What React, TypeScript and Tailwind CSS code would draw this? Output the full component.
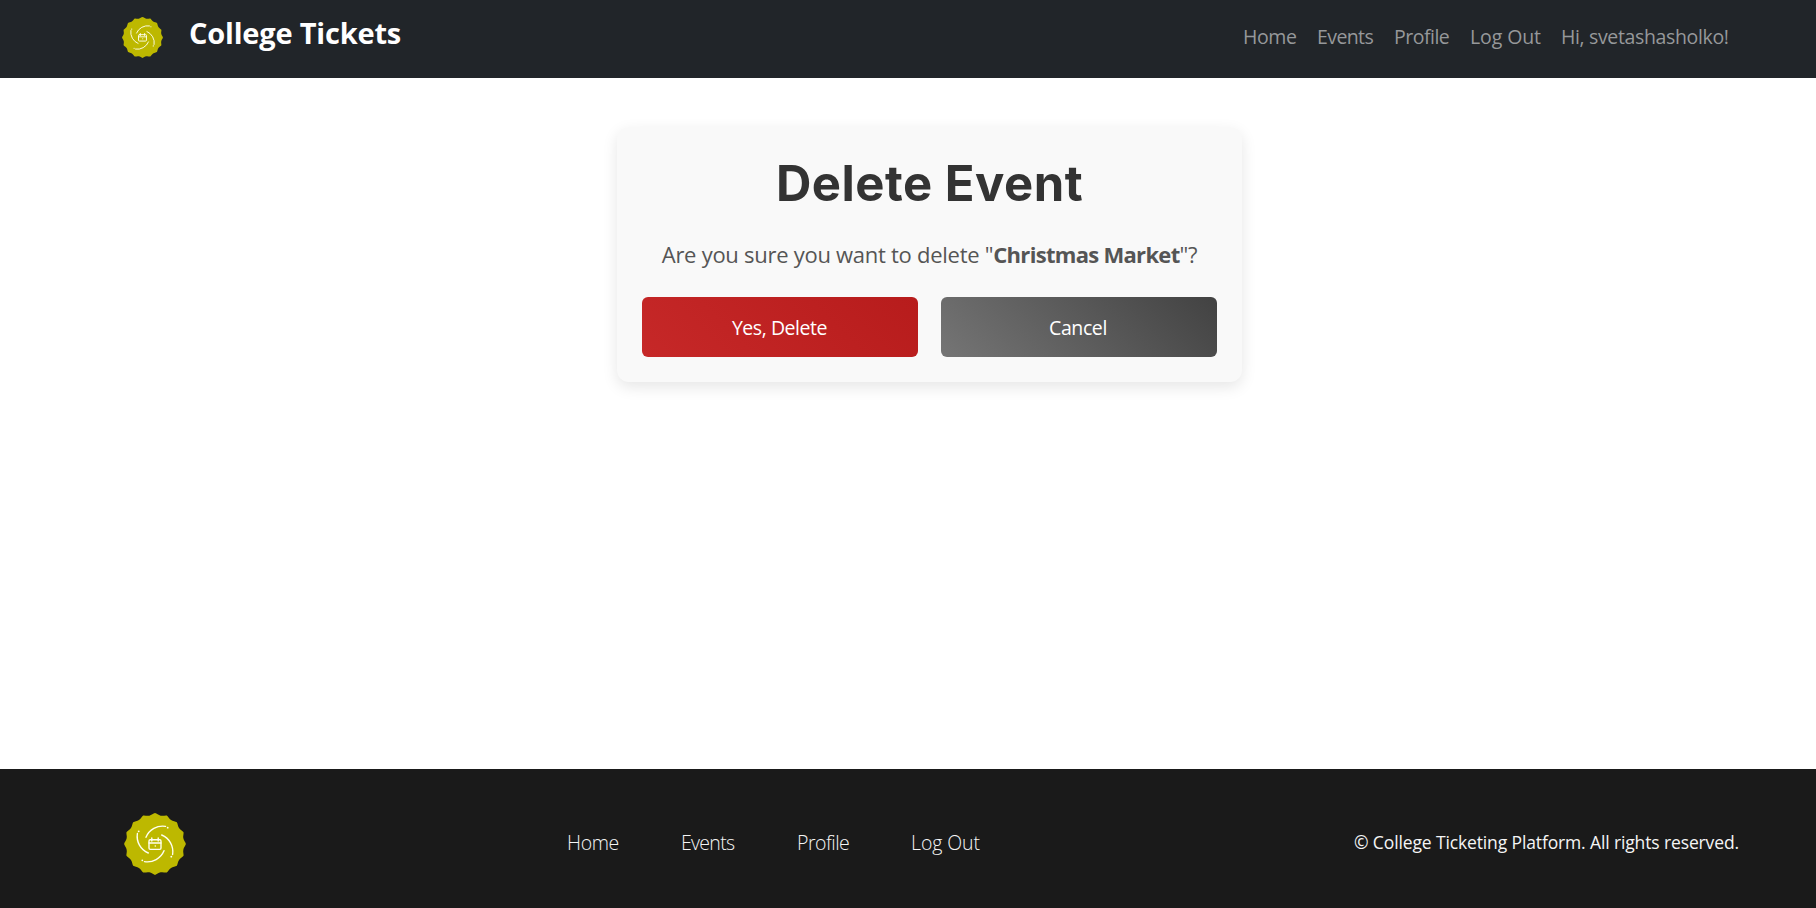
import React from 'react';

const ARC_ANGLES = [0, 90, 180, 270];

function badgeOutline(): string {
  const lobes = 16;
  const point = (radius: number, angle: number) =>
    `${(radius * Math.sin(angle)).toFixed(2)} ${(-radius * Math.cos(angle)).toFixed(2)}`;
  const step = (2 * Math.PI) / lobes;
  let d = `M${point(28.9, -step / 2)}`;
  for (let i = 0; i < lobes; i += 1) {
    const a = i * step;
    d += `C${point(28.9, a - step * 0.3)} ${point(30.5, a - step * 0.15)} ${point(30.9, a)}`;
    d += `C${point(30.5, a + step * 0.15)} ${point(28.9, a + step * 0.3)} ${point(28.9, a + step / 2)}`;
  }
  return `${d}Z`;
}

function Logo({ className }: { className: string }) {
  return (
    <svg viewBox="-31 -31 62 62" className={className} fill="none" aria-hidden="true">
      <path d={badgeOutline()} fill="#bdb800" />
      {ARC_ANGLES.map((angle) => (
        <g key={angle} transform={`rotate(${angle})`}>
          <path d="M-9 -6.7A18 18 0 0 1 10.5 -17.6" stroke="#fffff0" strokeWidth="1.4" strokeLinecap="round" />
          <circle cx="12.7" cy="-16.3" r="0.9" fill="#fffff0" />
        </g>
      ))}
      <g stroke="#fffff0" strokeWidth="1.4" strokeLinecap="round">
        <rect x="-6" y="-4.3" width="12" height="9.7" rx="1.3" />
        <path d="M-6 -1H6M-3.2 -6V-3M3.2 -6V-3" />
      </g>
      <circle cx="0.3" cy="2" r="0.8" fill="#fffff0" />
    </svg>
  );
}

export default function App() {
  return (
    <div className="flex h-[908px] w-full flex-col bg-white font-['Open_Sans',sans-serif]">
      <header className="flex h-[78px] shrink-0 items-start bg-[#212529] pl-[122px]">
        <Logo className="mt-[17px] h-[41px] w-[41px]" />
        <span className="ml-[26px] mt-[11px] whitespace-nowrap text-[29px] font-bold leading-[44px] tracking-[-0.2px] text-white">
          College Tickets
        </span>
        <nav className="ml-auto mt-[22px] flex whitespace-nowrap text-[19.5px] leading-[30px] text-[#96989a]">
          <a className="w-[74px] tracking-[-0.4px]">Home</a>
          <a className="w-[77px] tracking-[-0.6px]">Events</a>
          <a className="w-[76px] tracking-[-0.5px]">Profile</a>
          <a className="w-[91px] tracking-[-0.1px]">Log Out</a>
          <a className="w-[255px] tracking-[-0.35px]">Hi, svetashasholko!</a>
        </nav>
      </header>

      <main className="flex flex-1 flex-col items-center pl-[43px] pt-[49px]">
        <section className="flex h-[255px] w-[625px] flex-col rounded-xl bg-[#f9f9f9] px-[25px] text-center shadow-[0_5px_15px_rgba(0,0,0,0.1)]">
          <h1 className="mt-[27px] whitespace-nowrap font-['Inter',sans-serif] text-[49px] font-bold leading-[60px] tracking-[0.5px] text-[#333]">
            Delete Event
          </h1>
          <p className="mt-[22px] whitespace-nowrap text-[22px] leading-[36px] tracking-[-0.27px] text-[#555]">
            Are you sure you want to delete "<strong className="font-bold tracking-[-0.7px]">Christmas Market</strong>"?
          </p>
          <div className="mt-[25px] flex gap-[23px] text-[19.5px] leading-[60px] text-white">
            <button className="h-[60px] w-[276px] rounded-md bg-[linear-gradient(45deg,#c62828,#b71c1c)] pt-[2px] pr-[1px] leading-[58px] tracking-[-0.45px]">
              Yes, Delete
            </button>
            <button className="h-[60px] w-[276px] rounded-md bg-[linear-gradient(45deg,#757575,#424242)] pt-[2px] pr-[2px] leading-[58px] tracking-[-0.4px]">
              Cancel
            </button>
          </div>
        </section>
      </main>

      <footer className="flex h-[139px] shrink-0 items-start bg-[#1a1a1a] pl-[124px]">
        <Logo className="mt-[43.5px] h-[62px] w-[62px]" />
        <nav className="ml-[381px] mt-[59px] flex whitespace-nowrap text-[19.5px] font-light leading-[30px] text-[#f5f5f5]">
          <a className="w-[114px] tracking-[-0.4px]">Home</a>
          <a className="w-[116px] tracking-[-0.7px]">Events</a>
          <a className="w-[114px] tracking-[-0.5px]">Profile</a>
          <a className="w-[70px] tracking-[-0.1px]">Log Out</a>
        </nav>
        <p className="ml-[373px] mt-[58px] whitespace-nowrap text-[17.5px] leading-[30px] tracking-[-0.13px] text-[#f5f5f5]">
          © College Ticketing Platform. All rights reserved.
        </p>
      </footer>
    </div>
  );
}
